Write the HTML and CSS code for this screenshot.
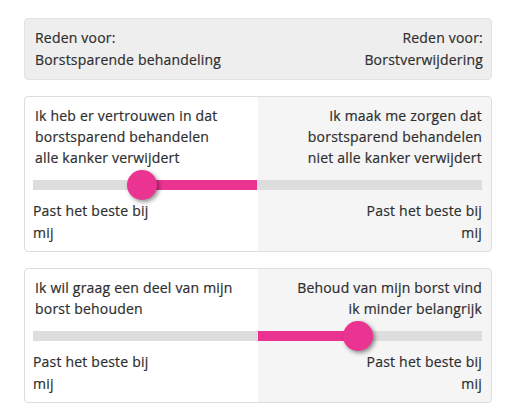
FILE: index.html
```html
<!DOCTYPE html>
<html lang="nl">
<head>
<meta charset="utf-8">
<link rel="stylesheet" href="styles.css">
</head>
<body>
<div class="page">
  <div class="header">
    <div class="col">Reden voor:<br>Borstsparende behandeling</div>
    <div class="col right">Reden voor:<br>Borstverwijdering</div>
  </div>

  <div class="card">
    <div class="row">
      <div class="statement">Ik heb er vertrouwen in dat<br>borstsparend behandelen<br>alle kanker verwijdert</div>
      <div class="statement right">Ik maak me zorgen dat<br>borstsparend behandelen<br>niet alle kanker verwijdert</div>
    </div>
    <div class="slider">
      <div class="track">
        <div class="fill" style="left:24.2%;width:25.8%"></div>
      </div>
      <div class="thumb" style="left:24.2%"></div>
    </div>
    <div class="row">
      <div class="label">Past het beste bij mij</div>
      <div class="label right">Past het beste bij mij</div>
    </div>
  </div>

  <div class="card">
    <div class="row">
      <div class="statement">Ik wil graag een deel van mijn<br>borst behouden</div>
      <div class="statement right">Behoud van mijn borst vind<br>ik minder belangrijk</div>
    </div>
    <div class="slider">
      <div class="track">
        <div class="fill" style="left:50%;width:22.4%"></div>
      </div>
      <div class="thumb" style="left:72.4%"></div>
    </div>
    <div class="row">
      <div class="label">Past het beste bij mij</div>
      <div class="label right">Past het beste bij mij</div>
    </div>
  </div>
</div>
</body>
</html>
```

FILE: styles.css
```css
html, body {
  margin: 0;
  padding: 0;
  background: #fff;
}

body {
  font-family: "Open Sans", "Liberation Sans", sans-serif;
  font-size: 14px;
  letter-spacing: 0.2px;
  color: #2e2e2e;
  -webkit-text-stroke: 0.2px #2e2e2e;
}

.page {
  width: 468px;
  padding: 18px 0 0 24px;
  display: flex;
  flex-direction: column;
  gap: 16px;
}

.header {
  background: #eeeeee;
  border: 1px solid #e2e2e2;
  border-radius: 4px;
  padding: 8px 8px 8px 10px;
  line-height: 22px;
  display: flex;
  justify-content: space-between;
}

.right {
  text-align: right;
}

.card {
  border: 1px solid #dddddd;
  border-radius: 4px;
  background: linear-gradient(to right, #ffffff 50%, #f5f5f5 50%);
  padding: 8px 9px 7px 8px;
}

.row {
  display: flex;
  justify-content: space-between;
}

.statement {
  width: 210px;
  line-height: 21px;
  padding-left: 2px;
  white-space: nowrap;
}

.statement.right {
  width: 210px;
  padding-left: 0;
}

.label {
  width: 126px;
  line-height: 22px;
}

.slider {
  position: relative;
  height: 30px;
  margin-top: 2px;
  display: flex;
  align-items: center;
}

.track {
  position: relative;
  width: 100%;
  height: 10px;
  background: #dddddd;
}

.fill {
  position: absolute;
  top: 0;
  bottom: 0;
  background: #eb3491;
}

.thumb {
  position: absolute;
  top: 0;
  width: 30px;
  height: 30px;
  margin-left: -15px;
  border-radius: 50%;
  background: #eb3491;
  box-shadow: 2px 2px 4px rgba(0, 0, 0, 0.45);
}
```
